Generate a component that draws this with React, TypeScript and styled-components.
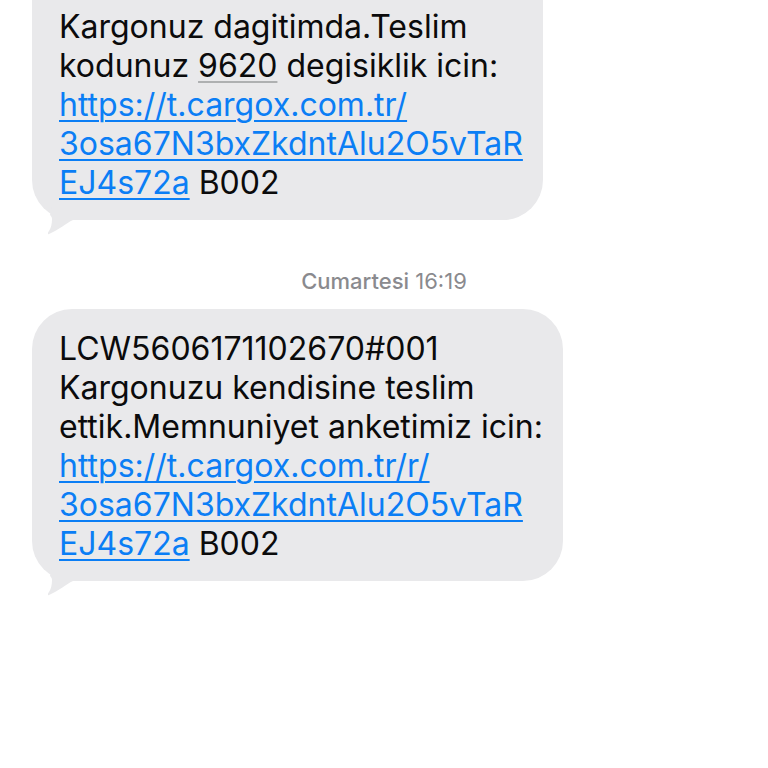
import React from 'react';
import styled, { createGlobalStyle } from 'styled-components';

const GlobalStyle = createGlobalStyle`
  * {
    margin: 0;
    padding: 0;
    box-sizing: border-box;
  }

  body {
    font-family: Inter, 'Liberation Sans', sans-serif;
    background-color: #ffffff;
    color: #0b0b0c;
  }
`;

const colors = {
  bubble: '#e9e9eb',
  link: '#0b7ef5',
  muted: '#8a8a8e',
};

type BubbleProps = {
  continued?: boolean;
  children: React.ReactNode;
};

const Bubble: React.FC<BubbleProps> = ({ continued = false, children }) => (
  <BubbleBody $continued={continued}>
    <p>{children}</p>
    <Tail viewBox="0 0 32 38" aria-hidden="true">
      <path d="M5 4 L32 22 L25 23 C18 26 11 33 1 37 C-1 38 0 35 1 34 C3 31 4 27 4 22 C4 20 3 19 2 18 Z" />
    </Tail>
  </BubbleBody>
);

const App: React.FC = () => {
  return (
    <>
      <GlobalStyle />
      <Thread>
        <Bubble continued>
          Kargonuz dagitimda.Teslim
          <br />
          kodunuz <Code>9620</Code> degisiklik icin:
          <br />
          <Link href="https://t.cargox.com.tr/3osa67N3bxZkdntAlu2O5vTaREJ4s72a">
            https://t.cargox.com.tr/
            <br />
            3osa67N3bxZkdntAlu2O5vTaR
            <br />
            EJ4s72a
          </Link>{' '}
          B002
        </Bubble>

        <Timestamp>
          <strong>Cumartesi</strong> 16:19
        </Timestamp>

        <Bubble>
          LCW5606171102670#001
          <br />
          Kargonuzu kendisine teslim
          <br />
          ettik.Memnuniyet anketimiz icin:
          <br />
          <Link href="https://t.cargox.com.tr/r/3osa67N3bxZkdntAlu2O5vTaREJ4s72a">
            https://t.cargox.com.tr/r/
            <br />
            3osa67N3bxZkdntAlu2O5vTaR
            <br />
            EJ4s72a
          </Link>{' '}
          B002
        </Bubble>
      </Thread>
    </>
  );
};

// Styled Components
const Thread = styled.main`
  display: flex;
  flex-direction: column;
  align-items: flex-start;
  padding: 0 32px 48px;
`;

const BubbleBody = styled.article<{ $continued: boolean }>`
  position: relative;
  padding: ${({ $continued }) => ($continued ? '7px 20px 18px 27px' : '20px 20px 18px 27px')};
  border-radius: ${({ $continued }) => ($continued ? '0 0 40px 40px' : '40px')};
  background: ${colors.bubble};
  font-size: 32px;
  line-height: 39px;
  white-space: nowrap;
`;

const Tail = styled.svg`
  position: absolute;
  left: 16px;
  bottom: -15px;
  width: 32px;
  height: 38px;
  fill: ${colors.bubble};
`;

const Link = styled.a`
  color: ${colors.link};
  text-decoration: underline;
  text-decoration-thickness: 2px;
  text-underline-offset: 4px;
`;

const Code = styled.span`
  text-decoration: underline;
  text-decoration-color: #aeb0b1;
  text-decoration-thickness: 2px;
  text-underline-offset: 4px;
`;

const Timestamp = styled.time`
  align-self: center;
  margin: 47px 0 14px;
  font-size: 22px;
  line-height: 28px;
  color: ${colors.muted};

  strong {
    font-weight: 500;
  }
`;

export default App;
